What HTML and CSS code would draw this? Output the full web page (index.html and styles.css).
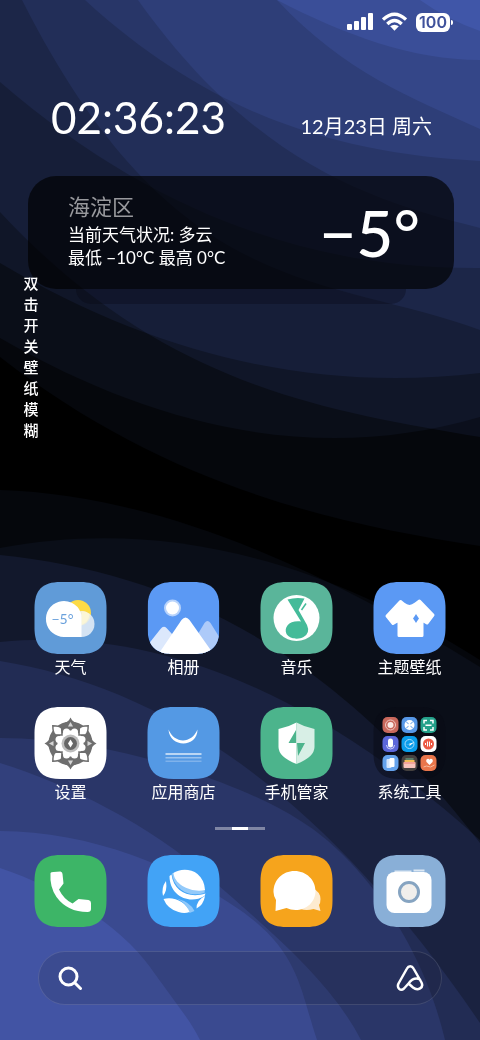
FILE: index.html
```
<!DOCTYPE html>
<html lang="zh-CN">
<head>
    <meta charset="UTF-8">
    <meta name="viewport" content="width=device-width, initial-scale=1.0">
    <title>桌面</title>
    <link rel="stylesheet" href="styles.css">
</head>
<body>
    <svg class="wallpaper" viewBox="0 0 480 1040" preserveAspectRatio="none" aria-hidden="true">
        <rect width="480" height="1040"/>
        <!-- upper waves -->
        <path class="faint" d="M0 357C160 481 320 522 480 546V0H0Z"/>
        <path class="faint" d="M0 338C160 430 320 464 480 417V0H0Z"/>
        <path class="wave" d="M0 212C160 384 320 410 480 437V0H0Z"/>
        <path class="wave" d="M0 263C160 358 320 392 480 373V0H0Z"/>
        <path class="wave" d="M0 82C160 220 320 269 480 268V0H0Z"/>
        <path class="wave" d="M22 0C175 303 327 274 480 330V0Z"/>
        <path class="wave" d="M138 0C252 160 366 200 480 228V0Z"/>
        <path class="wave" d="M85 0C217 121 348 154 480 161V0Z"/>
        <path class="wave" d="M277 0C345 73 412 98 480 129V0Z"/>
        <path class="wave" d="M277 0C345 35 412 60 480 60V0Z"/>
        <path class="wave" d="M420 0Q448 20 480 31V0Z"/>
        <!-- lower waves -->
        <path class="faint" d="M0 490C160 495 320 568 480 667V1040H0Z"/>
        <path class="faint" d="M0 548C160 518 320 558 480 660V1040H0Z"/>
        <path class="wave low" d="M0 555C160 572 320 636 480 843V1040H0Z"/>
        <path class="wave low" d="M0 642C160 626 320 696 480 840V1040H0Z"/>
        <path class="wave low" d="M0 661C160 687 320 787 480 1023V1040H0Z"/>
        <path class="wave low" d="M0 738C90 738 180 765 240 790C295 813 320 833 340 852S420 935 445 1040H0Z"/>
        <path class="wave low" d="M0 763C70 785 150 825 210 878S330 980 361 1040H0Z"/>
        <path class="wave low" d="M0 831C90 831 180 868 240 910S300 990 317 1040H0Z"/>
        <path class="wave low" d="M0 868C60 888 120 925 150 967S190 1020 200 1040H0Z"/>
    </svg>

    <div class="screen">
        <div class="status-bar">
            <svg width="26" height="18" viewBox="0 0 26 18" fill="#fff">
                <rect y="11" width="5" height="6" rx="1"/>
                <rect x="7" y="8" width="5" height="9" rx="1"/>
                <rect x="14" y="4" width="5" height="13" rx="1"/>
                <rect x="21" width="5" height="17" rx="1"/>
            </svg>
            <svg width="25" height="20" viewBox="0 0 26 20" fill="none" stroke="#fff" stroke-width="3.500">
                <path d="M1 7.500Q13-3.500 25 7.500M5.500 12Q13 5 20.500 12"/>
                <path d="M13 19l-4.500-4.500Q13 11 17.500 14.500Z" fill="#fff" stroke="none"/>
            </svg>
            <div class="battery">100</div>
        </div>

        <div class="clock-row">
            <div class="time" id="time">02:36:23</div>
            <div class="date">12月23日 周六</div>
        </div>

        <div class="weather-wrap">
            <div class="weather-card">
                <div class="weather-info">
                    <div class="district">海淀区</div>
                    <div>当前天气状况: 多云</div>
                    <div>最低 −10°C 最高 0°C</div>
                </div>
                <div class="temperature">−5°</div>
            </div>
            <button class="blur-toggle" id="blurToggle">双击开关壁纸模糊</button>
        </div>

        <div class="apps">
            <button class="app">
                <svg class="icon" viewBox="0 0 72 72">
                    <path fill="#609bd8" d="M0 26C0 8 8 0 26 0H46C64 0 72 8 72 26V46C72 64 64 72 46 72H26C8 72 0 64 0 46Z"/>
                    <circle cx="43.500" cy="31" r="13" fill="#fddb45"/>
                    <circle cx="47" cy="42" r="13" fill="#e9f0f8" opacity=".85"/>
                    <path fill="#fff8d4" d="M47 29a13 13 0 0 1 8 3a13 13 0 0 1-8 11z" opacity=".8"/>
                    <path fill="#fff" d="M47 55H30a18 18 0 1 1 16-25q1 2 1 6z"/>
                    <text class="icon-temp" x="17" y="42">−5°</text>
                </svg>
                <span>天气</span>
            </button>
            <button class="app">
                <svg class="icon" viewBox="0 0 72 72">
                    <clipPath id="tile"><path d="M0 26C0 8 8 0 26 0H46C64 0 72 8 72 26V46C72 64 64 72 46 72H26C8 72 0 64 0 46Z"/></clipPath>
                    <g clip-path="url(#tile)">
                        <rect width="72" height="72" fill="#5b99f4"/>
                        <circle cx="25" cy="26" r="8.500" fill="#b8d3fb"/>
                        <circle cx="25" cy="26" r="6.500" fill="#fff"/>
                        <path fill="#adcaf9" d="M48 56L57 41Q60 37 63 41L76 62V72H48Z"/>
                        <path fill="#dce8fc" d="M-2 66L13 47Q16 43 19 46L30 58L20 72H-2Z"/>
                        <path fill="#fff" d="M11 72L34 38Q38 33 42 38L66 72Z"/>
                    </g>
                </svg>
                <span>相册</span>
            </button>
            <button class="app">
                <svg class="icon" viewBox="0 0 72 72">
                    <path fill="#5ab59a" d="M0 26C0 8 8 0 26 0H46C64 0 72 8 72 26V46C72 64 64 72 46 72H26C8 72 0 64 0 46Z"/>
                    <circle cx="36" cy="36" r="23" fill="#fff"/>
                    <path fill="#44bb99" d="M27 17.500Q35 15 44 16.500L38 28L46.500 43Q50 51 43 55C38 58 29 57 26 52C23 45 29 38 40.500 39.500Z"/>
                    <path d="M41 28L45.500 21.500" stroke="#44bb99" stroke-width="1.500"/>
                </svg>
                <span>音乐</span>
            </button>
            <button class="app">
                <svg class="icon" viewBox="0 0 72 72">
                    <path fill="#5b99f4" d="M0 26C0 8 8 0 26 0H46C64 0 72 8 72 26V46C72 64 64 72 46 72H26C8 72 0 64 0 46Z"/>
                    <path fill="#fff" stroke="#fff" stroke-width="3" stroke-linejoin="round" d="M27 19.500L30 22Q36 27 42 22L46 19L59.500 33L53.500 41L48.500 38V53.500H25.500V38L19.500 41.500L13.500 34Z"/>
                    <path fill="#5b99f4" d="M42.500 32Q44 34.500 45.500 36.500Q44 38.500 42.500 41Q41 38.500 39.500 36.500Q41 34.500 42.500 32Z"/>
                </svg>
                <span>主题壁纸</span>
            </button>
            <button class="app">
                <svg class="icon" viewBox="0 0 72 72">
                    <path fill="#fff" d="M0 26C0 8 8 0 26 0H46C64 0 72 8 72 26V46C72 64 64 72 46 72H26C8 72 0 64 0 46Z"/>
                    <g transform="translate(36 36.500)">
                        <circle r="22" fill="#6e6e6e"/>
                        <g fill="#6e6e6e">
                            <path id="spike" d="M0-26Q2-21.500 7-20V-15H-7V-20Q-2-21.500 0-26Z"/>
                            <use href="#spike" transform="rotate(90)"/>
                            <use href="#spike" transform="rotate(180)"/>
                            <use href="#spike" transform="rotate(270)"/>
                        </g>
                        <!-- scalloped hub -->
                        <g fill="#fff">
                            <circle r="13"/>
                            <g id="lobes">
                                <circle cx="-4" cy="-11.500" r="3.500"/>
                                <circle cx="4" cy="-11.500" r="3.500"/>
                                <circle cx="-4" cy="11.500" r="3.500"/>
                                <circle cx="4" cy="11.500" r="3.500"/>
                            </g>
                            <use href="#lobes" transform="rotate(90)"/>
                        </g>
                        <g fill="#d5d5d5">
                            <path id="mark" d="M0-21.500L2.500-17H-2.500Z"/>
                            <use href="#mark" transform="rotate(90)"/>
                            <use href="#mark" transform="rotate(180)"/>
                            <use href="#mark" transform="rotate(270)"/>
                        </g>
                        <g transform="rotate(45)" fill="#fff" stroke="#6e6e6e" stroke-width="1.500">
                            <path id="petal" d="M0-25Q5-20 4.500-17L0-12L-4.500-17Q-5-20 0-25Z"/>
                            <use href="#petal" transform="rotate(90)"/>
                            <use href="#petal" transform="rotate(180)"/>
                            <use href="#petal" transform="rotate(270)"/>
                        </g>
                        <circle r="9" fill="#bdbdbd"/>
                        <circle r="6.500" fill="#666"/>
                        <path fill="#fff" d="M0-4L2.500 0L0 4L-2.500 0Z"/>
                    </g>
                </svg>
                <span>设置</span>
            </button>
            <button class="app">
                <svg class="icon" viewBox="0 0 72 72">
                    <path fill="#5499e4" d="M0 26C0 8 8 0 26 0H46C64 0 72 8 72 26V46C72 64 64 72 46 72H26C8 72 0 64 0 46Z"/>
                    <path fill="#fff" d="M21 22.500C27 37 44 37 50 22.500C50 41 22 41 21 22.500Z"/>
                    <g fill="#fff">
                        <rect x="18" y="46" width="36" height="2" opacity=".6"/>
                        <rect x="18" y="50" width="36" height="1.500" opacity=".4"/>
                        <rect x="18" y="53.500" width="36" height="1.500" opacity=".25"/>
                    </g>
                </svg>
                <span>应用商店</span>
            </button>
            <button class="app">
                <svg class="icon" viewBox="0 0 72 72">
                    <path fill="#4cb48c" d="M0 26C0 8 8 0 26 0H46C64 0 72 8 72 26V46C72 64 64 72 46 72H26C8 72 0 64 0 46Z"/>
                    <path fill="#fff" d="M36 15.500Q28 20 18 22V40Q18 50 36 57Z"/>
                    <path fill="#d8efe6" d="M36 15.500Q44 20 54 22V40Q54 50 36 57Z"/>
                    <path fill="#4cb48c" d="M35.500 23V36H28ZM36.500 36H44.500L37.500 49Z"/>
                </svg>
                <span>手机管家</span>
            </button>
            <button class="app">
                <svg class="icon" viewBox="0 0 72 72">
                    <path fill="#080a14" opacity=".5" d="M0 26C0 8 8 0 26 0H46C64 0 72 8 72 26V46C72 64 64 72 46 72H26C8 72 0 64 0 46Z"/>
                    <rect x="9" y="10" width="16" height="16" rx="5" fill="#c9685c"/>
                    <circle cx="17" cy="18" r="5" fill="none" stroke="#f0c6c0"/>
                    <circle cx="17" cy="18" r="3" fill="#fae9e6"/>
                    <rect x="28" y="10" width="16" height="16" rx="5" fill="#5797e6"/>
                    <circle cx="36" cy="18" r="5" fill="#fff"/>
                    <path d="M32.500 14.500l7 7m0-7l-7 7" stroke="#5797e6"/>
                    <circle cx="36" cy="18" r="1.500" fill="#fff"/>
                    <rect x="47" y="10" width="16" height="16" rx="5" fill="#24a18a"/>
                    <path fill="none" stroke="#fff" stroke-width="1.500" d="M50.500 16.500v-3h3M56.500 13.500h3v3M59.500 20v3h-3M53.500 23h-3v-3M52 18.200h6"/>
                    <rect x="9" y="29" width="16" height="16" rx="5" fill="#5c67da"/>
                    <rect x="14.500" y="31.500" width="5" height="9" rx="2.500" fill="#fff"/>
                    <path d="M13 38q0 4 4 4t4-4" fill="none" stroke="#cdd1fa"/>
                    <rect x="28" y="29" width="16" height="16" rx="5" fill="#0a9cea"/>
                    <circle cx="36" cy="37" r="4.500" fill="none" stroke="#a7dcfa"/>
                    <path d="M32 38l9-3-5 4v-2z" fill="#fff"/>
                    <rect x="47" y="29" width="16" height="16" rx="5" fill="#fff"/>
                    <circle cx="55" cy="37" r="5.500" fill="#ec5a45"/>
                    <path d="M52 36v2M54 34.500v5M56 34.500v5M58 36v2" stroke="#fff"/>
                    <rect x="9" y="48" width="16" height="16" rx="5" fill="#64a2ec"/>
                    <rect x="13" y="52" width="5" height="9" rx="1" fill="#d5e6fc"/>
                    <rect x="16" y="51" width="5" height="9" rx="1" fill="#fff"/>
                    <rect x="28" y="48" width="16" height="16" rx="5" fill="#45413f"/>
                    <path d="M32 52h8" stroke="#71bb91"/>
                    <path d="M31 54h10" stroke="#f3bd59" stroke-width="2"/>
                    <rect x="30" y="55" width="12" height="6" rx="1" fill="#f8c4bd"/>
                    <path d="M30 56h12" stroke="#ee8379"/>
                    <rect x="47" y="48" width="16" height="16" rx="5" fill="#e9764b"/>
                    <path fill="#fff" d="M56 58l-3-3q-1-3 1.500-3.200q1 0 1.500 1q.500-1 1.500-1q2.500.200 1.500 3.200z"/>
                    <path d="M50 60l3-1 4 1 4-2" fill="none" stroke="#f6bb9e"/>
                </svg>
                <span>系统工具</span>
            </button>
        </div>

        <div class="pager"><i></i></div>

        <div class="dock">
            <button class="app" aria-label="电话">
                <svg class="icon" viewBox="0 0 72 72">
                    <path fill="#3db567" d="M0 26C0 8 8 0 26 0H46C64 0 72 8 72 26V46C72 64 64 72 46 72H26C8 72 0 64 0 46Z"/>
                    <path fill="#fff" d="M16 18Q17 16.500 26 16.500Q28 17 28 19L29 28.500L24.500 34.500Q29 44 38 48.500L44 44L54 45Q56.500 45.500 56.500 48V54Q56.500 57 53 57Q33 57 22 42Q15 32 16 18Z"/>
                </svg>
            </button>
            <button class="app" aria-label="浏览器">
                <svg class="icon" viewBox="0 0 72 72">
                    <path fill="#42a3f6" d="M0 26C0 8 8 0 26 0H46C64 0 72 8 72 26V46C72 64 64 72 46 72H26C8 72 0 64 0 46Z"/>
                    <path fill="#93cafa" d="M24.500 18.500C26 33 40 43 57 38L57.500 34Q42 35 28 17Z"/>
                    <path fill="#fff" d="M26 18C31 14 43 13 50 19Q57 25 57.500 35C44 38 27 30 26 18Z"/>
                    <path fill="#fff" d="M22 21L24 19.500C26 36 41 44 58 38.500L57 41C42 50 22 41 22 21Z"/>
                    <path fill="#fff" d="M18.500 26Q20 36 15.500 41Q13.500 33 18.500 26Z"/>
                    <path fill="#8fc8fa" d="M29 43.500Q40 48 42 58L47 56Q43 47 29 43.500Z"/>
                    <path fill="#fff" d="M16 44C26 41 39 47 42 57Q37 59 31 57Q20 54 16 44Z"/>
                    <path fill="#fff" d="M57.500 41Q49 45 49 53.500Q56 50 57.500 41Z"/>
                </svg>
            </button>
            <button class="app" aria-label="信息">
                <svg class="icon" viewBox="0 0 72 72">
                    <path fill="#f6a41c" d="M0 26C0 8 8 0 26 0H46C64 0 72 8 72 26V46C72 64 64 72 46 72H26C8 72 0 64 0 46Z"/>
                    <path fill="#fdebd0" d="M52 33Q60 37 60 44Q60 48 58.500 50L60 56L53 54Q46 56 40 54Z"/>
                    <path fill="#fff" d="M15 56L15.500 45Q13 41 13 37C13 25 22 16 34 16S55 25 55 36C55 47 46 55 35 55Q30 55 26 53Z"/>
                </svg>
            </button>
            <button class="app" aria-label="相机">
                <svg class="icon" viewBox="0 0 72 72">
                    <path fill="#89afd7" d="M0 26C0 8 8 0 26 0H46C64 0 72 8 72 26V46C72 64 64 72 46 72H26C8 72 0 64 0 46Z"/>
                    <path d="M21 16.500H38M40 15.500H51" stroke="#dce8f4" stroke-width="2"/>
                    <rect x="13" y="17" width="45" height="41" rx="8" fill="#fff"/>
                    <circle cx="35.500" cy="37" r="9.500" fill="#f1efec" stroke="#86a4c1" stroke-width="3"/>
                </svg>
            </button>
        </div>

        <form class="search">
            <button type="button" aria-label="搜索">
                <svg width="24" height="24" viewBox="0 0 24 24" fill="none" stroke="#fff" stroke-width="3" stroke-linecap="round">
                    <circle cx="10.500" cy="10.500" r="8.500"/>
                    <path d="M17 17l5.500 5.500"/>
                </svg>
            </button>
            <input type="text" aria-label="搜索内容">
            <button type="button" aria-label="语音助手">
                <svg width="28" height="28" viewBox="0 0 28 28" fill="none" stroke="#fff" stroke-width="2.500" stroke-linecap="round" stroke-linejoin="round">
                    <path d="M12.500 19.500L17 23.500C22 27.500 28 23.500 25.500 18.500L17.500 4.500C16 1.500 12.500 1.500 11 4.500L2.500 19.500C.500 24 4.500 27.500 8 24.500L12.500 19.500C16 15 20 13.500 24 15.500"/>
                </svg>
            </button>
        </form>
    </div>

    <script>
        // double click switches the wallpaper blur
        document.getElementById('blurToggle').addEventListener('dblclick', () => {
            document.querySelector('.wallpaper').classList.toggle('blurred');
        });
    </script>
</body>
</html>
```
FILE: styles.css
```
* {
    box-sizing: border-box;
}
body {
    margin: 0;
    background: #000;
    color: #fff;
    font-family: Lato, "Noto Sans CJK SC", sans-serif;
}
button {
    padding: 0;
    border: none;
    background: none;
    color: inherit;
    font: inherit;
    cursor: pointer;
}
svg {
    display: block;
}
.wallpaper {
    position: fixed;
    inset: 0;
    width: 100%;
    height: 100%;
    isolation: isolate;
}
.wallpaper.blurred {
    filter: blur(12px);
}
.faint {
    fill: rgb(5, 7, 12);
    mix-blend-mode: plus-lighter;
}
.wave {
    fill: rgb(6, 8, 16);
    mix-blend-mode: plus-lighter;
}
.low {
    fill: rgb(8, 10, 20);
}
.screen {
    position: relative;
    display: flex;
    flex-direction: column;
    min-height: 100vh;
    padding-bottom: 35px;
}
.status-bar {
    display: flex;
    justify-content: flex-end;
    align-items: center;
    gap: 9px;
    padding: 12px 30px 0 0;
}
.battery {
    position: relative;
    width: 34px;
    height: 19px;
    border-radius: 6px;
    background: #fff;
    color: #3f519b;
    font-family: Inter, sans-serif;
    font-size: 16px;
    font-weight: 600;
    line-height: 19px;
    text-align: center;
}
.battery::after {
    content: "";
    position: absolute;
    top: 7px;
    right: -3px;
    width: 2px;
    height: 5px;
    border-radius: 0 2px 2px 0;
    background: #fff;
}
.clock-row {
    display: flex;
    justify-content: space-between;
    align-items: baseline;
    padding: 59px 48px 0 51px;
}
.time {
    font-size: 44px;
    line-height: 52px;
}
.date {
    font-size: 20px;
    line-height: 28px;
}
.weather-wrap {
    position: relative;
    margin: 33px 26px 0 28px;
}
.weather-wrap::before {
    content: "";
    position: absolute;
    left: 48px;
    right: 48px;
    top: 100%;
    height: 15px;
    border-radius: 0 0 20px 20px;
    background: rgba(8, 6, 16, 0.3);
}
.weather-card {
    display: flex;
    justify-content: space-between;
    align-items: center;
    min-height: 113px;
    padding: 0 34px 0 40px;
    border-radius: 28px;
    background: rgba(0, 0, 0, 0.66);
}
.weather-info {
    padding-bottom: 5px;
    font-size: 17px;
    line-height: 23px;
}
.district {
    color: #98999d;
    font-size: 22px;
    line-height: 32px;
}
.temperature {
    font-size: 64px;
    font-weight: 500;
    line-height: 76px;
}
.blur-toggle {
    position: absolute;
    top: 97px;
    left: -5px;
    width: 16px;
    font-size: 15px;
    font-weight: 500;
    line-height: 21px;
    word-break: break-all;
}
.apps,
.dock {
    display: grid;
    grid-template-columns: repeat(4, 1fr);
    padding: 0 14px;
}
.apps {
    row-gap: 27px;
    margin-top: auto;
}
.app {
    display: flex;
    flex-direction: column;
    align-items: center;
    font-size: 16px;
    line-height: 26px;
}
.icon {
    width: 73px;
    height: 72px;
}
.icon-temp {
    fill: #6aa1dc;
    font-size: 14px;
}
.pager {
    width: 50px;
    height: 3px;
    margin: 22px auto 25px;
    background: rgba(255, 255, 255, 0.4);
}
.pager i {
    display: block;
    width: 16px;
    height: 3px;
    margin: 0 auto;
    background: #fff;
}
.search {
    display: flex;
    align-items: center;
    height: 54px;
    margin: 24px 38px 0;
    padding: 0 17px 0 19px;
    border: 1px solid rgba(255, 255, 255, 0.12);
    border-radius: 27px;
    background: rgba(20, 20, 30, 0.14);
}
.search input {
    flex: 1;
    min-width: 0;
    border: none;
    outline: none;
    background: none;
    color: #fff;
    font: inherit;
}
```
